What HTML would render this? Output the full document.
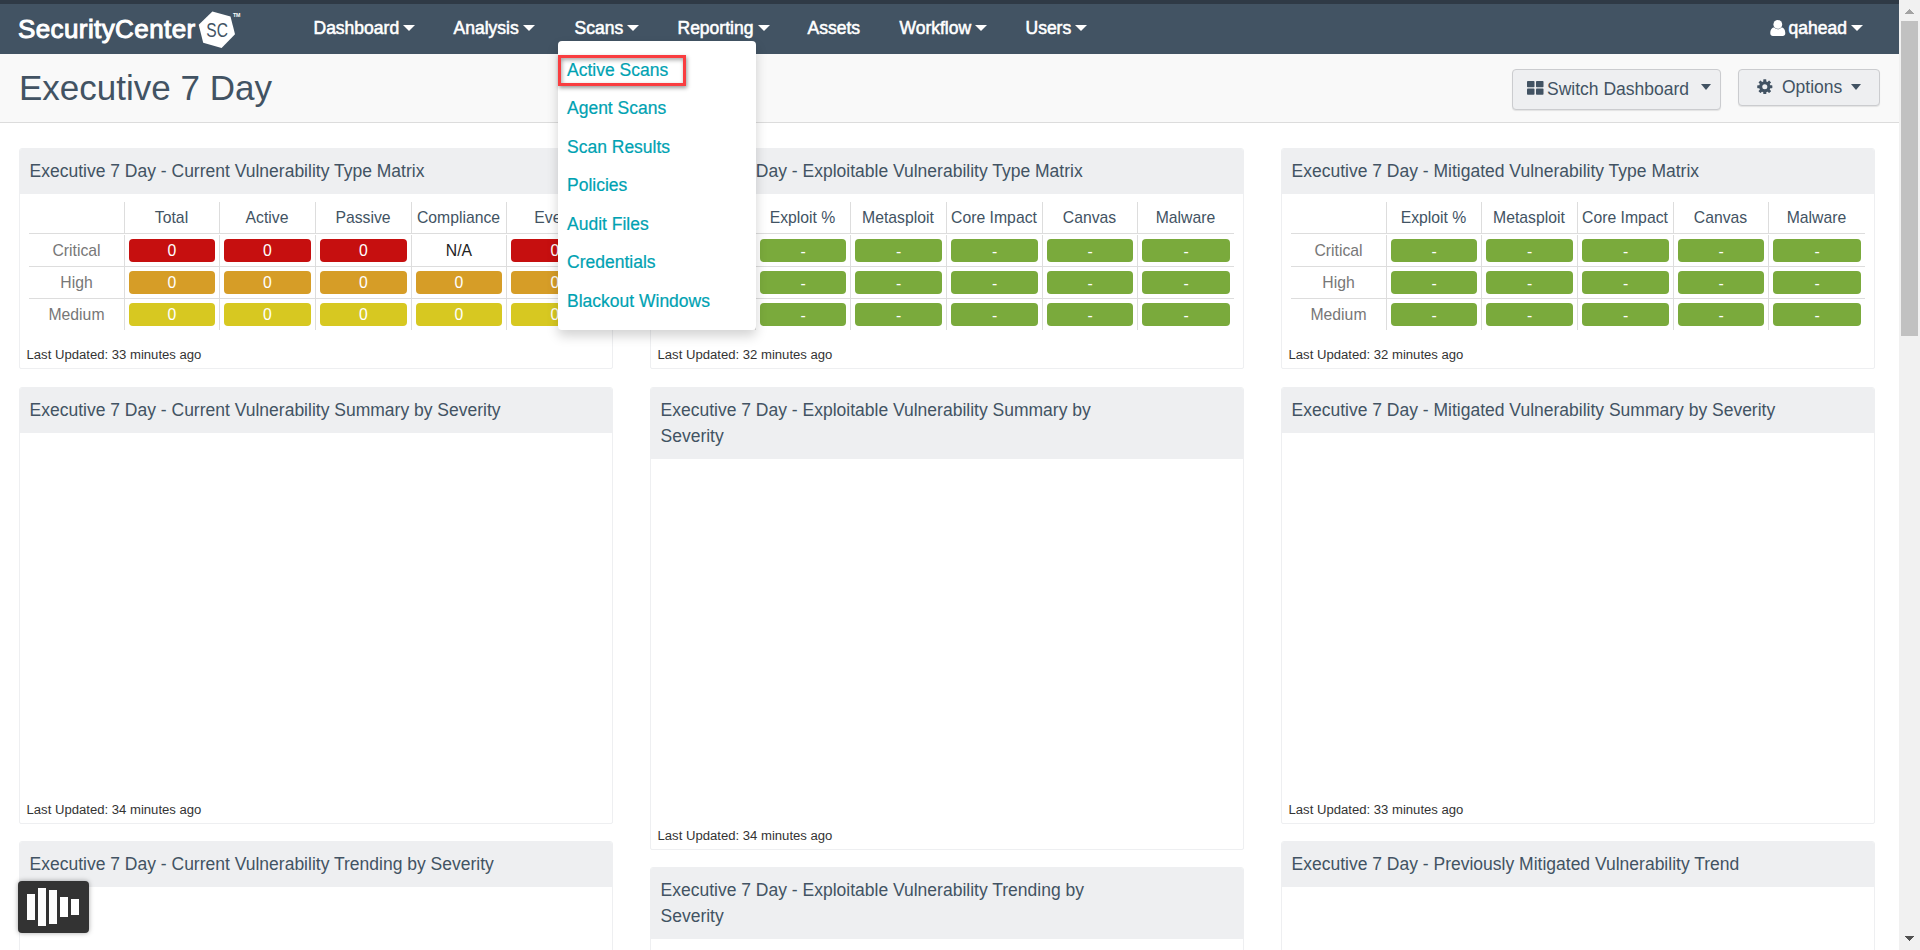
<!DOCTYPE html>
<html lang="en">
<head>
<meta charset="utf-8">
<title>SecurityCenter - Executive 7 Day</title>
<style>
*{box-sizing:border-box;}
html,body{margin:0;padding:0;}
body{width:1920px;height:950px;overflow:hidden;background:#fff;position:relative;
  font-family:"Liberation Sans",sans-serif;font-size:17.5px;color:#425363;}
a{text-decoration:none;color:inherit;}
.abs{position:absolute;}
#topstrip{left:0;top:0;width:1899px;height:4px;background:#2f3a46;}
#navbar{left:0;top:4px;width:1899px;height:50px;background:#425363;color:#fff;}
#brand{left:18px;top:8px;height:34px;white-space:nowrap;color:#fff;font-weight:normal;font-size:26px;line-height:34px;letter-spacing:0.4px;-webkit-text-stroke:1px #fff;}
.nav{position:absolute;top:0;height:50px;line-height:48px;font-size:17.5px;color:#fff;white-space:nowrap;-webkit-text-stroke:0.55px #fff;}
.caret{display:inline-block;width:0;height:0;border-left:6.2px solid transparent;border-right:6.2px solid transparent;border-top:6.8px solid currentColor;vertical-align:middle;margin-left:4.2px;position:relative;top:-1px;}
#subhead{left:0;top:54px;width:1899px;height:69px;background:#f9f9f9;border-bottom:1px solid #dcdcdc;}
#pagetitle{left:19px;top:66px;font-size:35px;line-height:44px;color:#425363;white-space:nowrap;}
.btn{position:absolute;background:#eeeff1;border:1px solid #cbcccf;border-radius:4px;color:#425363;font-size:17.5px;white-space:nowrap;box-shadow:0 1px 1px rgba(0,0,0,.09);}
/* scrollbar */
#sb{left:1899px;top:0;width:21px;height:950px;background:#f1f1f1;}
#sbthumb{left:1901px;top:21px;width:17px;height:315px;background:#c1c1c1;}
.tri-up{left:1905px;top:9px;width:0;height:0;border-left:4.5px solid transparent;border-right:4.5px solid transparent;border-bottom:5px solid #a3a3a3;}
.tri-dn{left:1905px;top:936px;width:0;height:0;border-left:4.5px solid transparent;border-right:4.5px solid transparent;border-top:5px solid #505050;}
/* panels */
.panel{position:absolute;width:594px;background:#fff;border:1px solid #eeeff1;border-radius:3px 3px 2px 2px;overflow:hidden;}
.ph{background:#eeeff1;padding:9px 10px 10px 9.500px;line-height:26px;font-size:17.5px;color:#425363;}
.pf{position:absolute;left:6.5px;bottom:5px;font-size:13.125px;line-height:16px;color:#333;}
table.mx{position:absolute;left:9px;top:53px;width:574px;table-layout:fixed;border-collapse:separate;border-spacing:0;font-size:15.75px;color:#425363;}
table.mx td,table.mx th{font-weight:normal;text-align:center;padding:0;white-space:nowrap;overflow:visible;}
table.mx th{height:32px;line-height:31px;border-bottom:1px solid #ddd;}
table.mx td{padding:4px 4px 4px 5px;line-height:23px;}
table.mx td.rl{padding:4px 0;}
table.mx .rl{color:#777;}
table.mx .c{background:linear-gradient(#ddd,#ddd) no-repeat left top/1px 100%;}
table.mx tr.r1 td{border-top:1px solid transparent;border-bottom:1px solid #ddd;}
table.mx tr.r2 td{border-bottom:1px solid #ddd;}
.cell{display:block;height:23px;line-height:23px;border-radius:4px;color:#fff;}
.red{background:#c60f0f;} .org{background:#d69d27;} .yel{background:#d7c821;} .grn{background:#7aaa3c;line-height:25px;overflow:hidden;}
.na{color:#222;}
/* dropdown */
#dd{left:558px;top:41px;width:198px;height:289px;background:#fff;border-radius:4px;box-shadow:0 6px 12px rgba(0,0,0,.175);}
#dd a{position:absolute;left:9px;color:#00a2b2;font-size:17.5px;line-height:26px;white-space:nowrap;-webkit-text-stroke:0.2px #00a2b2;}
#hl{left:558px;top:55px;width:128px;height:31px;border:3px solid #f93d40;box-shadow:1px 2px 4px rgba(0,0,0,.4), inset 1px 2px 4px rgba(0,0,0,.35);}
/* widget */
#wd{left:18px;top:881px;width:71px;height:52px;background:#333;border-radius:4px;box-shadow:0 0 5px rgba(0,0,0,.35);}
#wd i{position:absolute;width:8px;background:#fff;}
</style>
</head>
<body>
<div id="topstrip" class="abs"></div>
<div id="navbar" class="abs">
  <div id="brand" class="abs">SecurityCenter</div>
  <svg class="abs" style="left:196px;top:4px" width="50" height="44" viewBox="0 0 50 44">
    <polygon points="16.4,3.6 34.5,8.4 39,26.3 25.6,39.9 7.2,34.7 2.7,16.8" fill="#fff"/>
    <text x="10.3" y="29.2" font-family="Liberation Sans, sans-serif" font-size="20" fill="#425363" textLength="21.6" lengthAdjust="spacingAndGlyphs">SC</text>
    <text x="36.9" y="8.9" font-family="Liberation Sans, sans-serif" font-size="5.6" font-weight="bold" fill="#fff" textLength="7.6" lengthAdjust="spacingAndGlyphs">TM</text>
  </svg>
  <a class="nav" style="left:313.5px">Dashboard<span class="caret"></span></a>
  <a class="nav" style="left:453.5px">Analysis<span class="caret"></span></a>
  <a class="nav" style="left:574.5px">Scans<span class="caret"></span></a>
  <a class="nav" style="left:677.5px">Reporting<span class="caret"></span></a>
  <a class="nav" style="left:807.5px">Assets</a>
  <a class="nav" style="left:899.5px">Workflow<span class="caret"></span></a>
  <a class="nav" style="left:1025.5px">Users<span class="caret"></span></a>
  <svg class="abs" style="left:1769.500px;top:15.500px" width="16" height="16" viewBox="0 0 16 16"><circle cx="7.8" cy="4.4" r="4.4" fill="#fff"/><path d="M0.300 13.600 C0.300 9.500 2.200 7.600 4.300 7.600 C5.300 8.700 6.500 9.200 7.800 9.200 C9.100 9.200 10.300 8.700 11.300 7.600 C13.400 7.600 15.300 9.500 15.300 13.600 C15.300 15.200 14.200 16 12.800 16 L2.800 16 C1.400 16 0.300 15.200 0.300 13.600Z" fill="#fff"/></svg>
  <a class="nav" style="left:1788.5px">qahead<span class="caret"></span></a>
</div>

<div id="subhead" class="abs"></div>
<div id="pagetitle" class="abs">Executive 7 Day</div>
<div class="btn" style="left:1512px;top:69px;width:209px;height:41px;line-height:39px;">
  <svg class="abs" style="left:14px;top:11px" width="17" height="14" viewBox="0 0 17 14"><rect x="0" y="0" width="7.500" height="6.200" rx="0.800" fill="#425363"/><rect x="9" y="0" width="7.500" height="6.200" rx="0.800" fill="#425363"/><rect x="0" y="7.600" width="7.500" height="6.200" rx="0.800" fill="#425363"/><rect x="9" y="7.600" width="7.500" height="6.200" rx="0.800" fill="#425363"/></svg>
  <span class="abs" style="left:34px;top:0">Switch Dashboard</span>
  <span class="caret" style="position:absolute;left:187.500px;top:14px;margin:0;border-left-width:5.500px;border-right-width:5.500px;border-top-width:6px"></span>
</div>
<div class="btn" style="left:1738px;top:69px;width:142px;height:37px;line-height:35px;">
  <svg class="abs" style="left:18.100px;top:8.900px" width="15.600" height="15.600" viewBox="0 0 16 16"><g fill="#425363"><circle cx="8" cy="8" r="5.800"/><rect x="6.450" y="0.250" width="3.100" height="15.500" rx="0.500" transform="rotate(0 8 8)"/><rect x="6.450" y="0.250" width="3.100" height="15.500" rx="0.500" transform="rotate(45 8 8)"/><rect x="6.450" y="0.250" width="3.100" height="15.500" rx="0.500" transform="rotate(90 8 8)"/><rect x="6.450" y="0.250" width="3.100" height="15.500" rx="0.500" transform="rotate(135 8 8)"/></g><circle cx="8" cy="8" r="2.600" fill="#eeeff1"/></svg>
  <span class="abs" style="left:43px;top:0">Options</span>
  <span class="caret" style="position:absolute;left:112px;top:14px;margin:0;border-left-width:5.500px;border-right-width:5.500px;border-top-width:6px"></span>
</div>

<!-- PANELS -->
<div id="panels">
<div class="panel" style="left:19px;top:148px;height:221px"><div class="ph">Executive 7 Day - Current Vulnerability Type Matrix</div><table class="mx"><colgroup><col style="width:95px"><col style="width:95px"><col style="width:96px"><col style="width:96px"><col style="width:95px"><col style="width:97px"></colgroup><tr><th class="rl"></th><th class="c">Total</th><th class="c">Active</th><th class="c">Passive</th><th class="c">Compliance</th><th class="c">Event</th></tr><tr class="r1"><td class="rl">Critical</td><td class="c"><span class="cell red">0</span></td><td class="c"><span class="cell red">0</span></td><td class="c"><span class="cell red">0</span></td><td class="c"><span class="cell na">N/A</span></td><td class="c"><span class="cell red">0</span></td></tr><tr class="r2"><td class="rl">High</td><td class="c"><span class="cell org">0</span></td><td class="c"><span class="cell org">0</span></td><td class="c"><span class="cell org">0</span></td><td class="c"><span class="cell org">0</span></td><td class="c"><span class="cell org">0</span></td></tr><tr class="r3"><td class="rl">Medium</td><td class="c"><span class="cell yel">0</span></td><td class="c"><span class="cell yel">0</span></td><td class="c"><span class="cell yel">0</span></td><td class="c"><span class="cell yel">0</span></td><td class="c"><span class="cell yel">0</span></td></tr></table><div class="pf">Last Updated: 33 minutes ago</div></div>
<div class="panel" style="left:650px;top:148px;height:221px"><div class="ph">Executive 7 Day - Exploitable Vulnerability Type Matrix</div><table class="mx"><colgroup><col style="width:95px"><col style="width:95px"><col style="width:96px"><col style="width:96px"><col style="width:95px"><col style="width:97px"></colgroup><tr><th class="rl"></th><th class="c">Exploit %</th><th class="c">Metasploit</th><th class="c">Core Impact</th><th class="c">Canvas</th><th class="c">Malware</th></tr><tr class="r1"><td class="rl">Critical</td><td class="c"><span class="cell grn">-</span></td><td class="c"><span class="cell grn">-</span></td><td class="c"><span class="cell grn">-</span></td><td class="c"><span class="cell grn">-</span></td><td class="c"><span class="cell grn">-</span></td></tr><tr class="r2"><td class="rl">High</td><td class="c"><span class="cell grn">-</span></td><td class="c"><span class="cell grn">-</span></td><td class="c"><span class="cell grn">-</span></td><td class="c"><span class="cell grn">-</span></td><td class="c"><span class="cell grn">-</span></td></tr><tr class="r3"><td class="rl">Medium</td><td class="c"><span class="cell grn">-</span></td><td class="c"><span class="cell grn">-</span></td><td class="c"><span class="cell grn">-</span></td><td class="c"><span class="cell grn">-</span></td><td class="c"><span class="cell grn">-</span></td></tr></table><div class="pf">Last Updated: 32 minutes ago</div></div>
<div class="panel" style="left:1281px;top:148px;height:221px"><div class="ph">Executive 7 Day - Mitigated Vulnerability Type Matrix</div><table class="mx"><colgroup><col style="width:95px"><col style="width:95px"><col style="width:96px"><col style="width:96px"><col style="width:95px"><col style="width:97px"></colgroup><tr><th class="rl"></th><th class="c">Exploit %</th><th class="c">Metasploit</th><th class="c">Core Impact</th><th class="c">Canvas</th><th class="c">Malware</th></tr><tr class="r1"><td class="rl">Critical</td><td class="c"><span class="cell grn">-</span></td><td class="c"><span class="cell grn">-</span></td><td class="c"><span class="cell grn">-</span></td><td class="c"><span class="cell grn">-</span></td><td class="c"><span class="cell grn">-</span></td></tr><tr class="r2"><td class="rl">High</td><td class="c"><span class="cell grn">-</span></td><td class="c"><span class="cell grn">-</span></td><td class="c"><span class="cell grn">-</span></td><td class="c"><span class="cell grn">-</span></td><td class="c"><span class="cell grn">-</span></td></tr><tr class="r3"><td class="rl">Medium</td><td class="c"><span class="cell grn">-</span></td><td class="c"><span class="cell grn">-</span></td><td class="c"><span class="cell grn">-</span></td><td class="c"><span class="cell grn">-</span></td><td class="c"><span class="cell grn">-</span></td></tr></table><div class="pf">Last Updated: 32 minutes ago</div></div>
<div class="panel" style="left:19px;top:387px;height:437px"><div class="ph">Executive 7 Day - Current Vulnerability Summary by Severity</div><div class="pf">Last Updated: 34 minutes ago</div></div>
<div class="panel" style="left:650px;top:387px;height:463px"><div class="ph">Executive 7 Day - Exploitable Vulnerability Summary by<br>Severity</div><div class="pf">Last Updated: 34 minutes ago</div></div>
<div class="panel" style="left:1281px;top:387px;height:437px"><div class="ph">Executive 7 Day - Mitigated Vulnerability Summary by Severity</div><div class="pf">Last Updated: 33 minutes ago</div></div>
<div class="panel" style="left:19px;top:841px;height:300px"><div class="ph">Executive 7 Day - Current Vulnerability Trending by Severity</div></div>
<div class="panel" style="left:650px;top:867px;height:300px"><div class="ph">Executive 7 Day - Exploitable Vulnerability Trending by<br>Severity</div></div>
<div class="panel" style="left:1281px;top:841px;height:300px"><div class="ph">Executive 7 Day - Previously Mitigated Vulnerability Trend</div></div>
</div>

<!-- dropdown -->
<div id="dd" class="abs">
  <a style="top:16px">Active Scans</a>
  <a style="top:54px">Agent Scans</a>
  <a style="top:93px">Scan Results</a>
  <a style="top:131px">Policies</a>
  <a style="top:170px">Audit Files</a>
  <a style="top:208px">Credentials</a>
  <a style="top:247px">Blackout Windows</a>
</div>
<div id="hl" class="abs"></div>

<div id="wd" class="abs">
  <i style="left:9px;top:13px;height:26px"></i>
  <i style="left:20px;top:7px;height:38px"></i>
  <i style="left:31px;top:9px;height:34px"></i>
  <i style="left:42px;top:16px;height:20px"></i>
  <i style="left:53px;top:18px;height:16px"></i>
</div>

<div id="sb" class="abs"></div>
<div id="sbthumb" class="abs"></div>
<svg class="abs" style="left:1905px;top:9px" width="9" height="5" viewBox="0 0 9 5" shape-rendering="crispEdges" fill="#a3a3a3"><rect x="4" y="0" width="1" height="1"/><rect x="3" y="1" width="3" height="1"/><rect x="2" y="2" width="5" height="1"/><rect x="1" y="3" width="7" height="1"/><rect x="0" y="4" width="9" height="1"/></svg>
<svg class="abs" style="left:1905px;top:936px" width="9" height="5" viewBox="0 0 9 5" shape-rendering="crispEdges" fill="#505050"><rect x="0" y="0" width="9" height="1"/><rect x="1" y="1" width="7" height="1"/><rect x="2" y="2" width="5" height="1"/><rect x="3" y="3" width="3" height="1"/><rect x="4" y="4" width="1" height="1"/></svg>
</body>
</html>
